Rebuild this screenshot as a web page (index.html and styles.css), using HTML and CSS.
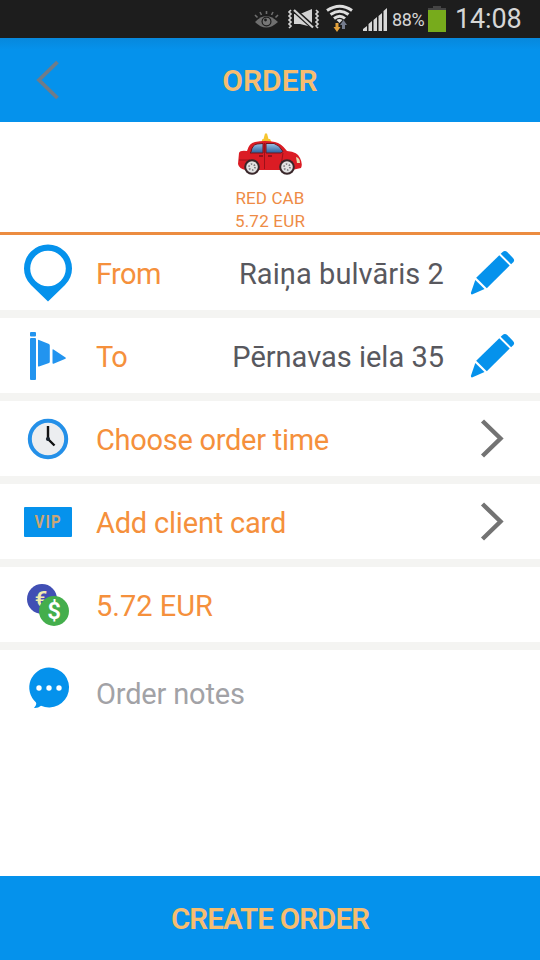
FILE: index.html
```
<!DOCTYPE html>
<html lang="en">
<head>
<meta charset="utf-8">
<title>Order</title>
<link rel="stylesheet" href="styles.css">
</head>
<body>
<div class="screen">
  <div class="status">
    <svg class="status-icons" viewBox="240 0 150 38" width="150" height="38">
      <path d="M255 22Q266 10 278 22Q266 33 255 22Z" fill="#6f6f6f"/>
      <circle cx="266.500" cy="21.500" r="5" fill="#1d1d1d"/>
      <circle cx="266.500" cy="21.500" r="3.800" fill="#777"/><circle cx="265.500" cy="20" r="1.400" fill="#1d1d1d"/>
      <path d="M266.500 11v3M260 12l1.500 3M273 12l-1.500 3M255 15l2.500 2.500M278 15l-2.500 2.500" stroke="#6f6f6f" stroke-width="1.600"/>
      <g fill="none" stroke="#d2d2d2" stroke-width="1.700"><path d="M291 10l-2 2 2 2-2 2 2 2-2 2 2 2-2 2 2 2-2 2M316 10l2 2-2 2 2 2-2 2 2 2-2 2 2 2-2 2 2 2"/></g>
      <path d="M294 14h6l12-5v18l-12-3h-6z" fill="#d2d2d2"/>
      <path d="M294 10L314 28" stroke="#1d1d1d" stroke-width="5"/>
      <path d="M294 10L313 27.500" stroke="#d2d2d2" stroke-width="2.200"/>
      <g fill="none" stroke="#dedede" stroke-width="3"><path d="M327 10.500Q340 2 352 10.500M330.500 14.500Q340 8 348.500 14.500M334 18.500Q340 14 345 18.500"/></g>
      <path d="M336.500 20Q339.500 18 342.500 20L339.500 23Z" fill="#dedede"/>
      <path d="M335.500 23h3v4h2l-3.500 5-3.500-5h2z" fill="#e3a13c"/>
      <path d="M342 29v-4h-2l3.500-5 3.500 5h-2v4z" fill="#747b8c"/>
      <path d="M363 31v-2l4-3v5zM368.500 31v-7l3.500-3v10zM373.500 31V20l3.500-3v14zM378.500 31V16l3.500-3v18zM383.500 31V11l3.500-3v23z" fill="#d8d8d8"/>
    </svg>
    <span class="percent">88%</span>
    <svg class="battery" viewBox="0 0 18 26" width="18" height="26"><path d="M5 0h8v2h5v3H0V2h5z" fill="#444"/><path d="M0 4h18v22H0z" fill="#77ab1c"/></svg>
    <span class="clock">14:08</span>
  </div>
  <header class="bar">
    <svg class="back" viewBox="0 0 24 40" width="24" height="40"><path d="M21.500 2L3 20l18.500 18" fill="none" stroke="#707c88" stroke-width="3.800"/></svg>
    <h1 class="bar-title">ORDER</h1>
  </header>
  <section class="cab">
    <svg class="car" viewBox="0 0 66 44" width="66" height="44">
      <defs><linearGradient id="glass" x2="0" y2="1"><stop stop-color="#9bc4e6"/><stop offset="1" stop-color="#285f9d"/></linearGradient></defs>
      <path d="M24 11l1.500-4h1L28 1.500h2l1.500 5.500h1.500l2 4z" fill="#f6c52f"/>
      <path d="M2 21Q3 18 10 19Q12 11 18 10Q28 8 38 10Q44 11 50 19Q61 20 63 26Q66 32 64 36L55 38H9Q2 37 1 32Z" fill="#db1c24"/>
      <path d="M14 20q1-7 6-8l6-.5V21H13zM29 11.500h8q5 1 9 8L44 21H29z" fill="url(#glass)" stroke="#76141b" stroke-width="1"/>
      <path d="M27.500 11v26M46 21l-2 13M2 28h11" fill="none" stroke="#9d1119" stroke-width="1"/>
      <path d="M22 24h4M31 24h4" stroke="#761018" stroke-width="1.500"/>
      <path d="M59 25q4 1 4 6h-3z" fill="#e9ddb0"/>
      <g fill="#39272a"><circle cx="15" cy="35" r="7.800"/><circle cx="50" cy="35" r="7.800"/></g>
      <g fill="#e2e2e2"><circle cx="15" cy="35" r="5.800"/><circle cx="50" cy="35" r="5.800"/></g>
      <g fill="none" stroke="#77777b" stroke-width="1.700" stroke-dasharray="1.500 1.640"><circle cx="15" cy="35" r="3"/><circle cx="50" cy="35" r="3"/></g>
    </svg>
    <span class="cab-name">RED CAB</span>
    <span class="cab-price">5.72 EUR</span>
  </section>
  <main class="rows">
    <div class="row">
      <svg class="icon" viewBox="0 0 96 75" width="96" height="75"><path fill-rule="evenodd" d="M48 9.500A24 24 0 0 0 24 33.500Q24 43 31 50L48 66.500L65 50Q72 43 72 33.500A24 24 0 0 0 48 9.500ZM48 15.700a17.800 17.800 0 1 1 0 35.600a17.800 17.800 0 1 1 0-35.600Z" fill="#0592ec"/></svg>
      <span class="label from">From</span><span class="value v1">Raiņa bulvāris 2</span>
      <svg class="action" viewBox="444 0 96 75" width="96" height="75"><g fill="#0592ec"><path d="M499.300 20.200L509.700 30.600L486.800 53.200L476.200 42.800Z"/><path d="M500.700 18.800L502.600 17Q505 15 507.500 17.300L513 23Q515 25 513.500 27L511.100 29.200Z"/><path d="M475.300 45L484.500 54.100L472 59.500Q470.500 59.500 471 57.500Z"/></g></svg>
    </div>
    <div class="row">
      <svg class="icon" viewBox="0 0 96 75" width="96" height="75"><g fill="#2294ef"><rect x="30" y="14" width="6" height="4.500" rx="1"/><rect x="30" y="20" width="6" height="42" rx="1"/><path d="M38 22q0-.5 1 0l10 4q.8.500.8 1.500v16q0 1-.8 1.500l-10 3.500q-1 .2-1-.5zM52.500 32q0-1 1-.5l12 8q.8.600 0 1.200l-12 5q-1 .3-1-.7z"/></g></svg>
      <span class="label to">To</span><span class="value v2">Pērnavas iela 35</span>
      <svg class="action" viewBox="444 0 96 75" width="96" height="75"><g fill="#0592ec"><path d="M499.300 20.200L509.700 30.600L486.800 53.200L476.200 42.800Z"/><path d="M500.700 18.800L502.600 17Q505 15 507.500 17.300L513 23Q515 25 513.500 27L511.100 29.200Z"/><path d="M475.300 45L484.500 54.100L472 59.500Q470.500 59.500 471 57.500Z"/></g></svg>
    </div>
    <div class="row">
      <svg class="icon" viewBox="0 0 96 75" width="96" height="75"><circle cx="48" cy="38" r="18.200" fill="#eceef0" stroke="#2490e8" stroke-width="4"/><path d="M48 25v13l6.500 6.500" fill="none" stroke="#111" stroke-width="2.400"/><circle cx="48" cy="38" r="2.100" fill="#1b2530"/></svg>
      <span class="label time">Choose order time</span>
      <svg class="action" viewBox="444 0 96 75" width="96" height="75"><path d="M482.500 20L500.500 37.500L482.500 55" fill="none" stroke="#737373" stroke-width="4.400"/></svg>
    </div>
    <div class="row">
      <div class="icon vip-slot"><span class="vip"><span class="vip-text">VIP</span></span></div>
      <span class="label card">Add client card</span>
      <svg class="action" viewBox="444 0 96 75" width="96" height="75"><path d="M482.500 20L500.500 37.500L482.500 55" fill="none" stroke="#737373" stroke-width="4.400"/></svg>
    </div>
    <div class="row">
      <svg class="icon" viewBox="0 0 96 75" width="96" height="75"><circle cx="42" cy="32" r="15" fill="#414fb4"/><text class="coin euro" x="41" y="39.500">€</text><circle cx="54" cy="44" r="15" fill="#44ae4c"/><text class="coin dollar" x="54" y="52">$</text></svg>
      <span class="label amount">5.72 EUR</span>
    </div>
    <div class="row notes">
      <svg class="icon" viewBox="0 0 96 75" width="96" height="75"><path d="M49 17.500A20 20 0 1 1 41 55.800Q38 58.300 34 58Q37 54.500 36 52.500A20 20 0 0 1 49 17.500Z" fill="#0592ec"/><g fill="#fff"><circle cx="39" cy="38" r="2.700"/><circle cx="49" cy="38" r="2.700"/><circle cx="59" cy="38" r="2.700"/></g></svg>
      <span class="label placeholder">Order notes</span>
    </div>
  </main>
  <footer class="create">CREATE ORDER</footer>
</div>
</body>
</html>
```
FILE: styles.css
```
* { box-sizing: border-box; }
body { margin: 0; font-family: Roboto, sans-serif; background: #fff; }
svg { display: block; flex: none; }
.screen { width: 540px; height: 960px; display: flex; flex-direction: column; overflow: hidden; }
.status { height: 38px; flex: none; background: #1d1d1d; display: flex; padding-left: 240px; color: #d6d6d6; white-space: nowrap; }
.percent { width: 38px; padding-left: 2px; font-size: 18px; line-height: 40px; letter-spacing: -.4px; }
.battery { margin-top: 6px; }
.clock { padding-left: 9px; font-size: 27px; line-height: 38px; letter-spacing: -.15px; }
.bar { height: 84px; flex: none; background: linear-gradient(#0788dc, #0592ec 12px); display: grid; grid-template-columns: 60px 1fr 60px; align-items: start; }
.back { margin: 22px 0 0 36px; }
.bar-title { margin: 0; text-align: center; font-size: 30px; line-height: 86px; font-weight: 600; color: #f6bd70; }
.cab { height: 113px; flex: none; border-bottom: 3px solid #ec8c40; display: flex; flex-direction: column; align-items: center; padding-top: 10px; color: #ee8b45; font-size: 17px; line-height: 23px; }
.cab-name { letter-spacing: .1px; }
.cab-price { letter-spacing: .2px; }
.car { margin-bottom: 11px; }
.rows { flex: 1; background: #f4f4f2; display: flex; flex-direction: column; gap: 8px; }
.row { height: 75px; flex: none; background: #fff; display: flex; line-height: 79px; font-size: 29px; white-space: nowrap; }
.icon { width: 96px; flex: none; }
.label { color: #f5903c; }
.from, .to { letter-spacing: -.6px; }
.time { letter-spacing: -.28px; }
.card { letter-spacing: -.2px; }
.value { margin-left: auto; color: #58585e; }
.v1 { letter-spacing: .07px; }
.action:last-child { margin-left: auto; }
.value + .action:last-child { margin-left: 0; }
.notes { flex: 1; line-height: 88px; }
.placeholder { color: #a2a2a6; letter-spacing: -.18px; }
.vip-slot { padding: 23px 0 0 24px; }
.vip { display: block; width: 48px; height: 30px; border-radius: 1px; background: #0592ec; color: #cba675; font-size: 17.500px; line-height: 31px; font-weight: 700; text-align: center; }
.vip-text { display: inline-block; letter-spacing: 1.500px; margin-right: -.500px; transform: scaleX(.85); }
.coin { font-family: Roboto, sans-serif; text-anchor: middle; }
.euro { font-size: 22px; font-weight: 600; fill: #f2edae; }
.dollar { font-size: 24px; font-weight: 600; fill: #fff; }
.create { height: 84px; flex: none; background: #0592ec; color: #f6bd70; text-align: center; font-size: 29.500px; line-height: 87px; font-weight: 600; letter-spacing: -.85px; }
```
